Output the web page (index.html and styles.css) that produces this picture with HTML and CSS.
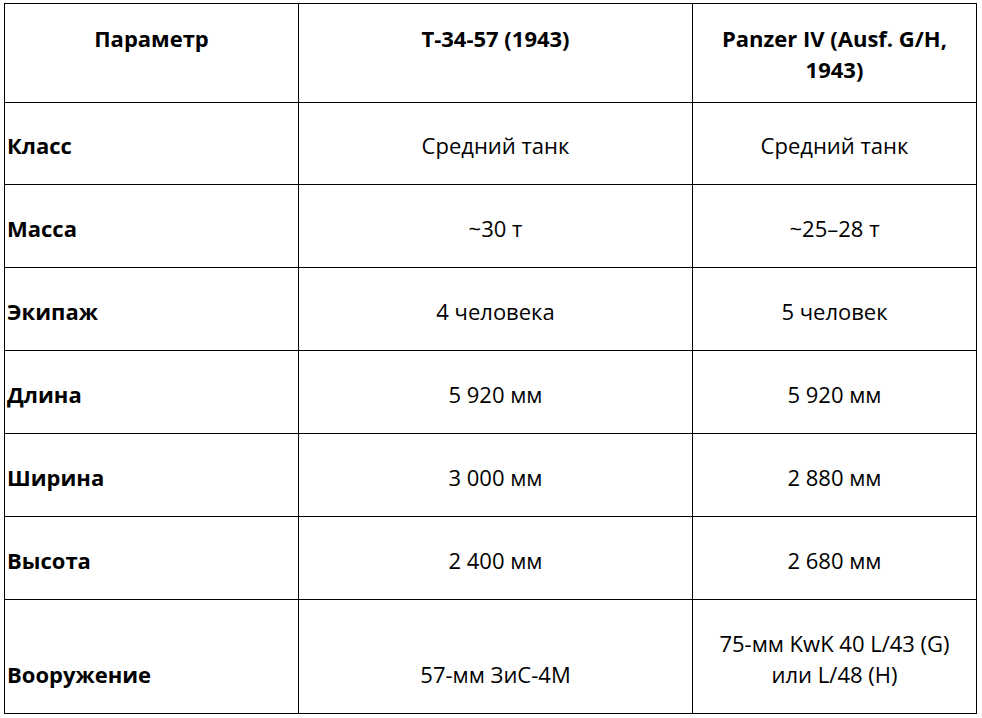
FILE: index.html
```html
<!DOCTYPE html>
<html lang="ru">
<head>
<meta charset="utf-8">
<title>Т-34-57 и Panzer IV</title>
<link rel="stylesheet" href="styles.css">
</head>
<body>
<table class="spec">
  <colgroup>
    <col class="c1">
    <col class="c2">
    <col class="c3">
  </colgroup>
  <thead>
    <tr class="head">
      <th>Параметр</th>
      <th>Т-34-57 (1943)</th>
      <th>Panzer IV (Ausf. G/H, 1943)</th>
    </tr>
  </thead>
  <tbody>
    <tr class="row first"><td class="name">Класс</td><td>Средний танк</td><td>Средний танк</td></tr>
    <tr class="row"><td class="name">Масса</td><td>~30 т</td><td>~25–28 т</td></tr>
    <tr class="row"><td class="name">Экипаж</td><td>4 человека</td><td>5 человек</td></tr>
    <tr class="row"><td class="name">Длина</td><td>5 920 мм</td><td>5 920 мм</td></tr>
    <tr class="row"><td class="name">Ширина</td><td>3 000 мм</td><td>2 880 мм</td></tr>
    <tr class="row"><td class="name">Высота</td><td>2 400 мм</td><td>2 680 мм</td></tr>
    <tr class="last"><td class="name">Вооружение</td><td>57-мм ЗиС-4М</td><td>75-мм KwK 40 L/43 (G) или L/48 (H)</td></tr>
  </tbody>
</table>
</body>
</html>
```

FILE: styles.css
```css
html, body {
  margin: 0;
  padding: 0;
  background: #ffffff;
}

body {
  font-family: "Open Sans", "Noto Sans", sans-serif;
  color: #000000;
  font-size: 22px;
  line-height: 31px;
}

.spec {
  border-collapse: collapse;
  table-layout: fixed;
  width: 972px;
  margin: 3px 0 0 4px;
}

.c1 { width: 294px; }
.c2 { width: 394px; }
.c3 { width: 284px; }

.spec th,
.spec td {
  border: 1px solid #000000;
  padding: 0 8px;
  text-align: center;
}

.spec th {
  font-weight: 700;
  vertical-align: top;
  padding-top: 19px;
}

.spec td {
  vertical-align: bottom;
  padding-bottom: 23px;
}

.spec td.name {
  text-align: left;
  font-weight: 700;
  padding-left: 2px;
}

.head { height: 99px; }
.row { height: 83px; }
.row.first { height: 82px; }
.last { height: 114px; }
```
